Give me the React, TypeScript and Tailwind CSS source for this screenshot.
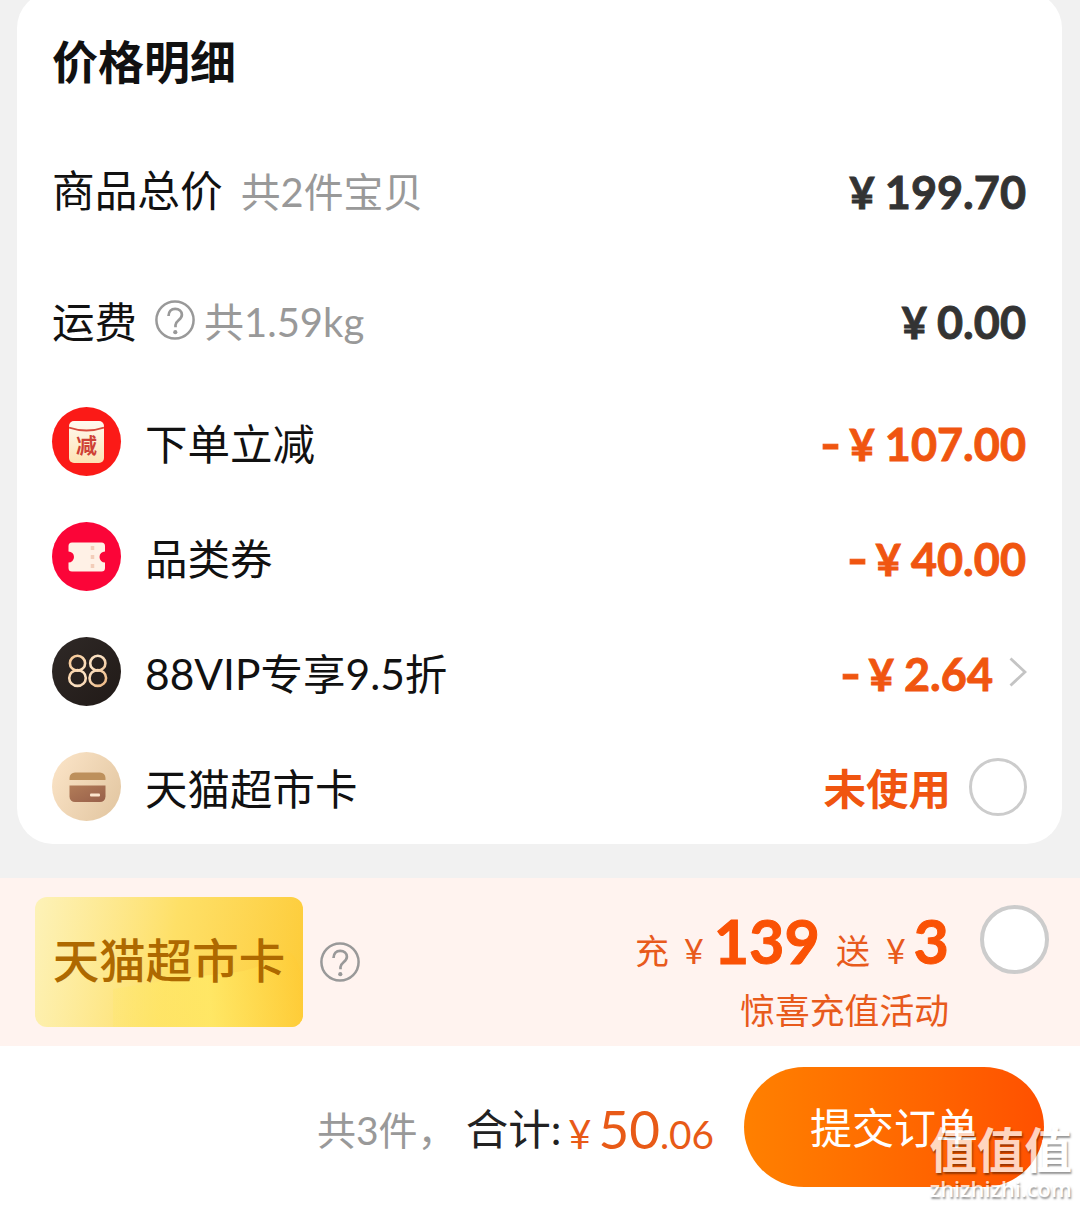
import React from "react";

function HelpIcon({ className = "" }: { className?: string }) {
  return (
    <svg viewBox="0 0 40 40" className={"h-10 w-10 shrink-0 " + className} fill="none">
      <circle cx="20" cy="20" r="18.6" stroke="currentColor" strokeWidth="2.5" />
      <path d="M13.500 16c0-4.800 2.900-7.200 6.700-7.200 3.900 0 6.700 2.300 6.700 5.900 0 5.300-6.400 5.600-6.400 10.300v2.200" stroke="currentColor" strokeWidth="2.700" />
      <circle cx="20.300" cy="32.200" r="2.100" fill="currentColor" />
    </svg>
  );
}

function DiscountIcon() {
  return (
    <div className="flex h-[69px] w-[69px] items-center justify-center rounded-full bg-[#fb1a17]">
      <div className="relative flex h-[42px] w-[35px] justify-center rounded-[5px] bg-linear-to-b from-[#fffaf0] to-[#fde3b4] pt-[13px]">
        <svg viewBox="0 0 35 12" className="absolute top-0 left-0 h-3 w-[35px]" fill="none">
          <path d="M0 6.500Q17.500 12.500 35 6.500" stroke="#d84a3c" strokeWidth="1.800" />
        </svg>
        <span className="text-[21px] leading-[22px] font-bold text-[#cf4136]">减</span>
      </div>
    </div>
  );
}

function CouponIcon() {
  return (
    <svg viewBox="0 0 69 69" className="h-[69px] w-[69px]">
      <circle cx="34.500" cy="34.500" r="34.500" fill="#fb0538" />
      <path d="M20 20.500H49.500a3.500 3.500 0 0 1 3.500 3.500V29.500a5.500 5.500 0 0 0 0 11V46a3.500 3.500 0 0 1-3.500 3.500H20a3.500 3.500 0 0 1-3.500-3.500V40.500a5.500 5.500 0 0 0 0-11V24a3.500 3.500 0 0 1 3.500-3.500Z" fill="#fff1e6" />
      <path d="M40.500 24v4M40.500 33v4M40.500 42v4" stroke="#f3cdb9" strokeWidth="3.500" />
    </svg>
  );
}

function VipIcon() {
  return (
    <svg viewBox="0 0 69 69" className="h-[69px] w-[69px]" fill="none">
      <defs>
        <linearGradient id="vipBg" x1="0" y1="0" x2="1" y2="1">
          <stop offset="0" stopColor="#2f2927" />
          <stop offset="1" stopColor="#211a17" />
        </linearGradient>
        <linearGradient id="vipStroke" gradientUnits="userSpaceOnUse" x1="16" y1="18" x2="54" y2="50">
          <stop offset="0" stopColor="#f6c48e" />
          <stop offset="0.5" stopColor="#fbe3c6" />
          <stop offset="1" stopColor="#eeb780" />
        </linearGradient>
      </defs>
      <circle cx="34.500" cy="34.500" r="34.500" fill="url(#vipBg)" />
      <g stroke="url(#vipStroke)" strokeWidth="2.600">
        <ellipse cx="25.500" cy="26.200" rx="7.600" ry="7.400" />
        <ellipse cx="25.500" cy="41" rx="8.300" ry="7.900" />
        <ellipse cx="45.800" cy="26.200" rx="7.600" ry="7.400" />
        <ellipse cx="45.800" cy="41" rx="8.300" ry="7.900" />
      </g>
    </svg>
  );
}

function CardIcon() {
  return (
    <svg viewBox="0 0 69 69" className="h-[69px] w-[69px]">
      <defs>
        <linearGradient id="cardBg" x1="0" y1="0.2" x2="1" y2="0.8">
          <stop offset="0" stopColor="#fae3c6" />
          <stop offset="1" stopColor="#e3c7a2" />
        </linearGradient>
        <linearGradient id="cardBody" x1="0" y1="0" x2="1" y2="1">
          <stop offset="0" stopColor="#b27c58" />
          <stop offset="1" stopColor="#98604a" />
        </linearGradient>
      </defs>
      <circle cx="34.500" cy="34.500" r="34.500" fill="url(#cardBg)" />
      <path d="M17.500 28v-2a5.500 5.500 0 0 1 5.500-5.500h25a5.500 5.500 0 0 1 5.500 5.500v2Z" fill="#bd905c" />
      <path d="M17.500 33.500h36v11a5.500 5.500 0 0 1-5.500 5.500h-25a5.500 5.500 0 0 1-5.500-5.500Z" fill="url(#cardBody)" />
      <rect x="38" y="41.500" width="10" height="3" rx="1" fill="#fbe4cc" />
    </svg>
  );
}

function DeductionRow({ icon, label, children }: { icon: React.ReactNode; label: string; children: React.ReactNode }) {
  return (
    <div className="flex h-[115px] items-center">
      {icon}
      <span className="ml-6 flex-1 pt-1 text-[42.5px] leading-[48px] text-[#111]">{label}</span>
      {children}
    </div>
  );
}

function Amount({ minus, value, className }: { minus?: boolean; value: string; className: string }) {
  return (
    <span className={"flex items-baseline text-[45px] leading-[48px] font-bold whitespace-nowrap [-webkit-text-stroke:0.9px_currentColor] " + className}>
      {minus && <span className="mr-[10px] inline-block scale-x-125">-</span>}
      <span className="mr-[10px] text-[44px]">¥</span>
      <span>{value}</span>
    </span>
  );
}

export default function App() {
  return (
    <div className="relative flex h-[1208px] w-[1080px] flex-col overflow-hidden bg-[#f1f1f1] font-['Lato','Noto_Sans_CJK_SC',sans-serif]">
      <section className="-mt-2 ml-[17px] h-[852px] w-[1045px] shrink-0 rounded-[36px] bg-white pt-2 pr-[35px] pl-[35px]">
        <h1 className="flex h-[126px] items-center pb-[3px] text-[46px] leading-[48px] font-bold text-[#111]">价格明细</h1>
        <div className="flex h-[130px] items-center justify-between">
          <div className="flex items-baseline pt-px leading-[48px]">
            <span className="text-[42.7px] text-[#111]">商品总价</span>
            <span className="ml-[18px] text-[39.8px] text-[#999]">共2件宝贝</span>
          </div>
          <Amount value="199.70" className="mr-px pt-px text-[#333]" />
        </div>
        <div className="flex h-[128px] items-center justify-between">
          <div className="flex items-center leading-[48px]">
            <span className="pt-[3px] text-[42.5px] text-[#111]">运费</span>
            <HelpIcon className="ml-[18px] text-[#999]" />
            <span className="ml-[9px] pt-[3px] text-[40px] text-[#999]">共1.59kg</span>
          </div>
          <Amount value="0.00" className="mr-px pt-[3px] text-[#333]" />
        </div>
        <DeductionRow icon={<DiscountIcon />} label="下单立减">
          <Amount minus value="107.00" className="mr-px pt-1 text-[#f05510]" />
        </DeductionRow>
        <DeductionRow icon={<CouponIcon />} label="品类券">
          <Amount minus value="40.00" className="mr-px pt-1 text-[#f05510]" />
        </DeductionRow>
        <DeductionRow icon={<VipIcon />} label="88VIP专享9.5折">
          <Amount minus value="2.64" className="pt-1 text-[#f05510]" />
          <svg viewBox="0 0 18 30" className="ml-4 h-[30px] w-[18px]" fill="none">
            <path d="M1.500 1.500L16 15L1.500 28.500" stroke="#c4c4c4" strokeWidth="2.800" />
          </svg>
        </DeductionRow>
        <DeductionRow icon={<CardIcon />} label="天猫超市卡">
          <span className="pt-1 text-[42.5px] leading-[48px] font-bold text-[#f05510]">未使用</span>
          <span className="ml-[18px] h-[58px] w-[58px] rounded-full border-[3px] border-[#ccc] bg-white" />
        </DeductionRow>
      </section>

      <section className="mt-[34px] flex h-[168px] shrink-0 items-start bg-[#fff3ef] pr-[31px] pl-[35px]">
        <div className="relative mt-[19px] flex h-[130px] w-[268px] items-center justify-center overflow-hidden rounded-[12px] bg-linear-100 from-[#fdf2b8] via-[#fee067] to-[#fdcb35] pb-[5px]">
          <svg viewBox="0 0 268 130" className="absolute inset-0 h-[130px] w-[268px]">
            <defs>
              <linearGradient id="sheen" gradientUnits="userSpaceOnUse" x1="78" y1="100" x2="268" y2="80">
                <stop offset="0" stopColor="#ffe766" stopOpacity="0.3" />
                <stop offset="0.5" stopColor="#ffea68" stopOpacity="0.8" />
                <stop offset="1" stopColor="#ffcb36" stopOpacity="0.8" />
              </linearGradient>
            </defs>
            <path d="M78 130V92Q150 80 195 76Q230 72 250 54Q264 54 268 90V130Z" fill="url(#sheen)" />
          </svg>
          <span className="relative text-[46.5px] leading-[48px] font-medium text-[#ae6900]">天猫超市卡</span>
        </div>
        <HelpIcon className="mt-16 ml-[17px] text-[#999]" />
        <div className="ml-auto flex flex-col items-end text-[#e85a1c]">
          <div className="mt-7 flex items-baseline leading-[70px] whitespace-nowrap">
            <span className="text-[34px]">充</span>
            <span className="ml-[15px] text-[34px]">¥</span>
            <span className="ml-[10px] text-[61px] font-bold text-[#fa5205] [-webkit-text-stroke:1px_currentColor]">139</span>
            <span className="ml-4 text-[34px]">送</span>
            <span className="ml-[16px] text-[34px]">¥</span>
            <span className="ml-2 text-[61px] font-bold text-[#fa5205] [-webkit-text-stroke:1px_currentColor]">3</span>
          </div>
          <span className="mt-px text-[34.8px] leading-[48px]">惊喜充值活动</span>
        </div>
        <span className="mt-[27px] ml-[31px] h-[69px] w-[69px] rounded-full border-4 border-[#ccc] bg-white" />
      </section>

      <footer className="flex h-[162px] shrink-0 items-center bg-white pr-9 pl-[317px] whitespace-nowrap">
        <div className="flex items-start pt-[7px] leading-[60px]">
          <div className="flex items-baseline pt-px">
            <span className="text-[39px] text-[#999]">共3件，</span>
            <span className="ml-[9px] text-[42.5px] text-[#222]">合计:</span>
          </div>
          <div className="ml-[7px] flex items-baseline pt-px text-[#e85a17]">
            <span className="text-[40px]">¥</span>
            <span className="ml-[7px] text-[53px]">50</span>
            <span className="text-[38.8px]">.06</span>
          </div>
        </div>
        <button className="ml-auto flex h-[120px] w-[300px] items-center justify-center rounded-full bg-linear-to-r from-[#ff8000] to-[#ff5000] pt-[2px] text-[42px] text-white">
          提交订单
        </button>
      </footer>

      <div className="absolute right-[8px] bottom-[6px] flex flex-col items-center text-white opacity-75 [text-shadow:1px_2px_2px_rgb(0_0_0/0.55)]">
        <span className="text-[47.5px] leading-[52px] font-bold">值值值</span>
        <span className="font-['Open_Sans',sans-serif] text-[21.8px] leading-[26px] font-semibold">zhizhizhi.com</span>
      </div>
    </div>
  );
}
